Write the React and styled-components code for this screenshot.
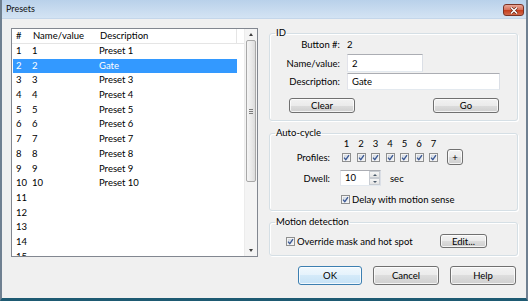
import React from "react";
import styled, { createGlobalStyle } from "styled-components";

const GlobalStyle = createGlobalStyle`
  html, body {
    margin: 0;
    padding: 0;
    background: #ffffff;
  }
  body {
    font-family: Lato, "Liberation Sans", sans-serif;
    font-size: 9.5px;
    color: #000;
  }
`;

const Window = styled.div`
  width: 528px;
  height: 301px;
  box-sizing: border-box;
  display: flex;
  flex-direction: column;
  background: #f0f0f0;
  border-left: 2px solid #6f8091;
  border-right: 2px solid #6f8091;
  border-bottom: 3px solid #1e5a72;
  overflow: hidden;
`;

const TitleBar = styled.div`
  height: 19px;
  flex: none;
  display: flex;
  align-items: flex-start;
  justify-content: space-between;
  padding: 0 2px 0 4px;
  background: linear-gradient(#b9d1ea, #c9dcf0 60%, #d3e3f3);
  border-bottom: 1px solid #c4d6ea;
  box-sizing: border-box;
`;

const Title = styled.span`
  font-size: 9px;
  line-height: 18px;
  color: #111;
`;

const CloseButton = styled.div`
  margin-top: 4px;
  width: 21px;
  height: 12px;
  box-sizing: border-box;
  border: 1px solid #7a3325;
  border-radius: 3px;
  background: linear-gradient(#e9a797 0%, #d8735c 45%, #c6401f 55%, #d06a4c 100%);
  display: flex;
  align-items: center;
  justify-content: center;
`;

const Body = styled.div`
  flex: 1;
  display: flex;
  gap: 11px;
  padding: 9px 0 0 9px;
`;

/* ---------- list ---------- */

const ListBox = styled.div`
  width: 247px;
  height: 229px;
  box-sizing: border-box;
  border: 1px solid #828790;
  background: #fff;
  display: flex;
`;

const ListMain = styled.div`
  flex: 1;
  overflow: hidden;
`;

const Header = styled.div`
  height: 15px;
  box-sizing: border-box;
  border-bottom: 1px solid #e5e5e5;
  display: flex;
`;

const HeaderCell = styled.div`
  width: ${p => p.$w}px;
  flex: none;
  box-sizing: border-box;
  padding-left: 4px;
  line-height: 14px;
  border-right: ${p => (p.$sep ? "1px solid #e5e5e5" : "none")};
`;

const Row = styled.div`
  height: 14.7px;
  width: 224px;
  margin-left: 1px;
  display: flex;
  line-height: 14.7px;
  background: ${p => (p.$selected ? "#3399ff" : "transparent")};
  color: ${p => (p.$selected ? "#fff" : "#000")};
`;

const Cell = styled.div`
  width: ${p => p.$w}px;
  flex: none;
  box-sizing: border-box;
  padding-left: 3px;
  white-space: nowrap;
`;

const ScrollBar = styled.div`
  width: 12px;
  flex: none;
  display: flex;
  flex-direction: column;
  background: #f4f4f4;
  border-left: 1px solid #ececec;
`;

const ScrollArrow = styled.div`
  height: 11px;
  flex: none;
  display: flex;
  align-items: center;
  justify-content: center;

  &::after {
    content: "";
    border-left: 2.5px solid transparent;
    border-right: 2.5px solid transparent;
    ${p =>
      p.$down
        ? "border-top: 3px solid #404040;"
        : "border-bottom: 3px solid #404040;"}
  }
`;

const Track = styled.div`
  flex: 1;
  padding: 0 1px;
`;

const Thumb = styled.div`
  height: 142px;
  box-sizing: border-box;
  border: 1px solid #a8a8a8;
  border-radius: 2px;
  background: linear-gradient(90deg, #f5f5f5, #e8e8e8 60%, #dcdcdc);
  display: flex;
  align-items: center;
  justify-content: center;
`;

const Grip = styled.div`
  width: 4px;
  height: 5px;
  background: repeating-linear-gradient(#7c7c7c 0 1px, transparent 1px 2px);
`;

/* ---------- right side ---------- */

const Side = styled.div`
  width: 249px;
  margin-top: -1px;
  display: flex;
  flex-direction: column;
`;

const Group = styled.fieldset`
  margin: ${p => p.$mt || 0}px 0 0 0;
  padding: 0 6px ${p => p.$pb}px 6px;
  border: 1px solid #d5dfe5;
  border-radius: 3px;
  box-shadow: inset 1px 1px 0 #fff, 1px 1px 0 #fff;
  min-width: 0;
`;

const Legend = styled.legend`
  padding: 0 1px;
  margin-left: -1px;
  line-height: 12px;
  font-size: 9.5px;
  color: #000;
`;

const FormRow = styled.div`
  height: ${p => p.$h}px;
  margin-top: ${p => p.$mt || 0}px;
  display: grid;
  grid-template-columns: ${p => p.$lw}px 1fr;
  column-gap: ${p => p.$gap || 7}px;
  align-items: center;
`;

const Label = styled.span`
  text-align: right;
  white-space: nowrap;
`;

const Inline = styled.div`
  display: flex;
  align-items: center;
  gap: ${p => p.$gap || 0}px;
  height: ${p => (p.$h ? `${p.$h}px` : "auto")};
  margin-top: ${p => p.$mt || 0}px;
`;

const TextBox = styled.input`
  box-sizing: border-box;
  width: ${p => p.$w}px;
  height: ${p => p.$h}px;
  padding: 0 4px;
  margin: 0;
  font: inherit;
  color: #000;
  background: #fff;
  border: 1px solid;
  border-color: #abadb3 #dbdfe6 #e3e9ef #e2e3ea;
  outline: none;
`;

const ButtonRow = styled.div`
  display: flex;
  flex: ${p => (p.$grow ? 1 : "none")};
  justify-content: ${p => p.$justify || "space-between"};
  gap: ${p => p.$gap || 0}px;
  margin-top: ${p => p.$mt || 0}px;
  padding: ${p => p.$pad || "0"};
`;

const Button = styled.button`
  box-sizing: border-box;
  width: ${p => p.$w}px;
  height: ${p => p.$h}px;
  padding: 0;
  margin: 0;
  font: inherit;
  color: #000;
  border: 1px solid ${p => (p.$default ? "#3c7fb1" : "#707070")};
  border-radius: 3px;
  background: ${p =>
    p.$default
      ? "linear-gradient(#f0f8fd 0%, #e4f2fc 50%, #d4eaf9 50%, #c6e2f6 100%)"
      : "linear-gradient(#f2f2f2 0%, #ebebeb 50%, #dddddd 50%, #cfcfcf 100%)"};
  box-shadow: inset 0 0 0 1px rgba(255, 255, 255, 0.75);
  flex: none;
`;

const Profiles = styled.div`
  display: flex;
  gap: 5.5px;
`;

const Num = styled.span`
  width: 9px;
  text-align: center;
  line-height: 10px;
`;

const Box = styled.span`
  width: 9px;
  height: 9px;
  box-sizing: border-box;
  flex: none;
  border: 1px solid #8e8f8f;
  background: linear-gradient(135deg, #cdd3dc, #f2f4f6);
  box-shadow: inset 0 0 0 1px #f4f4f4;
  display: flex;
  align-items: center;
  justify-content: center;
`;

const CheckLabel = styled.label`
  display: flex;
  align-items: center;
  gap: 2px;
  margin-left: ${p => p.$ml || 0}px;
  white-space: nowrap;
`;

const Spin = styled.div`
  width: 41px;
  height: 16px;
  box-sizing: border-box;
  display: flex;
  background: #fff;
  border: 1px solid;
  border-color: #abadb3 #dbdfe6 #e3e9ef #e2e3ea;
`;

const SpinText = styled.span`
  flex: 1;
  padding-left: 4px;
  line-height: 14px;
`;

const SpinButtons = styled.div`
  width: 11px;
  display: flex;
  flex-direction: column;
`;

const SpinArrow = styled.div`
  flex: 1;
  box-sizing: border-box;
  border: 1px solid #c8ccd2;
  background: linear-gradient(#f6f6f6, #e4e4e4);
  display: flex;
  align-items: center;
  justify-content: center;

  &::after {
    content: "";
    border-left: 2px solid transparent;
    border-right: 2px solid transparent;
    ${p =>
      p.$down
        ? "border-top: 2px solid #4a5a6a;"
        : "border-bottom: 2px solid #4a5a6a;"}
  }
`;

const Sec = styled.span`
  margin-left: 9px;
`;

const Check = () => (
  <Box>
    <svg width="7" height="7" viewBox="0 0 7 7">
      <path d="M1 3.6 L2.8 5.6 L6 1.2" fill="none" stroke="#3a5894" strokeWidth="1.3" />
    </svg>
  </Box>
);

const rows = [
  ["1", "1", "Preset 1"],
  ["2", "2", "Gate"],
  ["3", "3", "Preset 3"],
  ["4", "4", "Preset 4"],
  ["5", "5", "Preset 5"],
  ["6", "6", "Preset 6"],
  ["7", "7", "Preset 7"],
  ["8", "8", "Preset 8"],
  ["9", "9", "Preset 9"],
  ["10", "10", "Preset 10"],
  ["11", "", ""],
  ["12", "", ""],
  ["13", "", ""],
  ["14", "", ""],
  ["15", "", ""],
];

const cols = [17, 67, 141];

export default function App() {
  return (
    <>
      <GlobalStyle />
      <Window>
        <TitleBar>
          <Title>Presets</Title>
          <CloseButton>
            <svg width="8" height="7" viewBox="0 0 8 7">
              <path d="M1 0.5 L7 6.5 M7 0.5 L1 6.5" stroke="#5a1d10" strokeWidth="2.6" />
              <path d="M1 0.5 L7 6.5 M7 0.5 L1 6.5" stroke="#fff" strokeWidth="1.5" />
            </svg>
          </CloseButton>
        </TitleBar>

        <Body>
          <ListBox>
            <ListMain>
              <Header>
                <HeaderCell $w={cols[0]}>#</HeaderCell>
                <HeaderCell $w={cols[1]}>Name/value</HeaderCell>
                <HeaderCell $w={cols[2]} $sep>Description</HeaderCell>
              </Header>
              {rows.map(r => (
                <Row key={r[0]} $selected={r[0] === "2"}>
                  <Cell $w={cols[0] - 1}>{r[0]}</Cell>
                  <Cell $w={cols[1]}>{r[1]}</Cell>
                  <Cell $w={cols[2]}>{r[2]}</Cell>
                </Row>
              ))}
            </ListMain>
            <ScrollBar>
              <ScrollArrow />
              <Track>
                <Thumb>
                  <Grip />
                </Thumb>
              </Track>
              <ScrollArrow $down />
            </ScrollBar>
          </ListBox>

          <Side>
            <Group $pb={7}>
              <Legend>ID</Legend>
              <FormRow $h={10} $lw={64}>
                <Label>Button #:</Label>
                <span>2</span>
              </FormRow>
              <FormRow $h={18} $mt={5} $lw={64}>
                <Label>Name/value:</Label>
                <TextBox $w={76} $h={18} readOnly value="2" />
              </FormRow>
              <FormRow $h={17} $mt={1} $lw={64}>
                <Label>Description:</Label>
                <TextBox $w={153} $h={17} readOnly value="Gate" />
              </FormRow>
              <ButtonRow $mt={8} $pad="0 12px 0 13px">
                <Button $w={66} $h={15}>Clear</Button>
                <Button $w={66} $h={15}>Go</Button>
              </ButtonRow>
            </Group>

            <Group $mt={6} $pb={3}>
              <Legend>Auto-cycle</Legend>
              <FormRow $h={10} $lw={54} $gap={12}>
                <span />
                <Profiles>
                  {[1, 2, 3, 4, 5, 6, 7].map(n => (
                    <Num key={n}>{n}</Num>
                  ))}
                </Profiles>
              </FormRow>
              <FormRow $h={16} $lw={54} $gap={12}>
                <Label>Profiles:</Label>
                <Inline $gap={9}>
                  <Profiles>
                    {[1, 2, 3, 4, 5, 6, 7].map(n => (
                      <Check key={n} />
                    ))}
                  </Profiles>
                  <Button $w={16} $h={16}>+</Button>
                </Inline>
              </FormRow>
              <FormRow $h={16} $mt={5} $lw={54} $gap={10}>
                <Label>Dwell:</Label>
                <Inline>
                  <Spin>
                    <SpinText>10</SpinText>
                    <SpinButtons>
                      <SpinArrow />
                      <SpinArrow $down />
                    </SpinButtons>
                  </Spin>
                  <Sec>sec</Sec>
                </Inline>
              </FormRow>
              <FormRow $h={16} $mt={5} $lw={54} $gap={11}>
                <span />
                <CheckLabel>
                  <Check />
                  Delay with motion sense
                </CheckLabel>
              </FormRow>
            </Group>

            <Group $mt={5} $pb={7}>
              <Legend>Motion detection</Legend>
              <Inline $h={14} $mt={6}>
                <CheckLabel $ml={10}>
                  <Check />
                  Override mask and hot spot
                </CheckLabel>
                <ButtonRow $grow $justify="flex-end" $pad="0 24px 0 0">
                  <Button $w={47} $h={14}>Edit...</Button>
                </ButtonRow>
              </Inline>
            </Group>

            <ButtonRow $justify="flex-end" $gap={11} $mt={10} $pad="0 2px 0 0">
              <Button $w={64} $h={19} $default>OK</Button>
              <Button $w={66} $h={19}>Cancel</Button>
              <Button $w={66} $h={19}>Help</Button>
            </ButtonRow>
          </Side>
        </Body>
      </Window>
    </>
  );
}
